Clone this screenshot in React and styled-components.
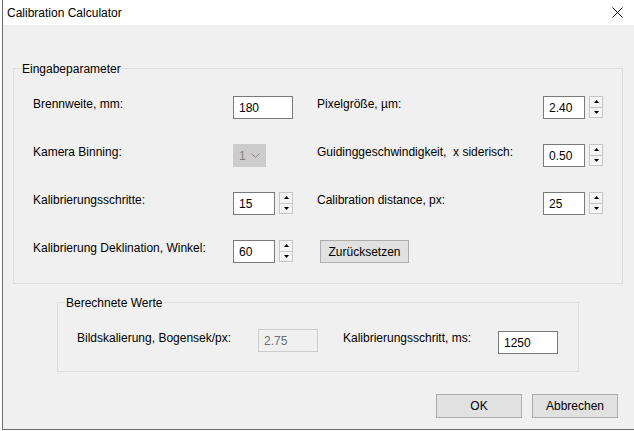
import React from "react";
import styled, { createGlobalStyle } from "styled-components";

const GlobalStyle = createGlobalStyle`
  html, body {
    margin: 0;
    padding: 0;
    background: #ffffff;
  }
  body {
    font-family: "Liberation Sans", Arial, sans-serif;
    font-size: 12px;
    color: #000000;
  }
  #root {
    width: 634px;
    height: 431px;
    overflow: hidden;
  }
`;

const Window = styled.div`
  margin-left: 2px;
  width: 632px;
  height: 430px;
  box-sizing: border-box;
  border-left: 1px solid #6a6a6a;
  border-bottom: 1px solid #6a6a6a;
  display: flex;
  flex-direction: column;
  background: #f0f0f0;
`;

const TitleBar = styled.div`
  flex: none;
  height: 25px;
  display: flex;
  align-items: center;
  justify-content: space-between;
  padding: 0 11px 0 4px;
  background: #ffffff;
`;

const Title = styled.span`
  line-height: 16px;
`;

const CloseIcon = styled.svg`
  display: block;
  width: 11px;
  height: 11px;
`;

const Content = styled.div`
  flex: 1;
  display: flex;
  flex-direction: column;
  padding: 43px 11px 0 10px;
`;

const Group = styled.section`
  position: relative;
  box-sizing: border-box;
  border: 1px solid #dcdcdc;
`;

const Caption = styled.span`
  position: absolute;
  top: -8px;
  left: 7px;
  padding: 0 1px;
  line-height: 16px;
  background: #f0f0f0;
`;

const ParamGrid = styled.div`
  display: grid;
  grid-template-columns: 200px 84px 226px 1fr;
  grid-auto-rows: 23px;
  row-gap: 25px;
  padding: 27px 0 20px 19px;
`;

const Label = styled.span`
  align-self: start;
  line-height: 16px;
  white-space: pre;
  width: ${(p) => (p.$w ? `${p.$w}px` : "auto")};
  flex: none;
  margin-top: ${(p) => p.$top || 0}px;
`;

const Field = styled.div`
  display: flex;
  align-items: flex-start;
`;

const TextBox = styled.input`
  box-sizing: border-box;
  width: ${(p) => p.$w}px;
  height: 23px;
  margin: ${(p) => p.$top || 0}px 0 0 0;
  padding: 0 0 0 5px;
  border: 1px solid ${(p) => (p.disabled ? "#cccccc" : "#7a7a7a")};
  background: ${(p) => (p.disabled ? "#f0f0f0" : "#ffffff")};
  color: ${(p) => (p.disabled ? "#6d6d6d" : "#000000")};
  font: inherit;
  outline: none;
  flex: none;
`;

const Spin = styled.div`
  display: flex;
  flex-direction: column;
  width: 14px;
  height: 22px;
  margin-left: 4px;
`;

const SpinButton = styled.div`
  flex: 1;
  display: flex;
  align-items: center;
  justify-content: center;
  border: 1px solid #c6c6c6;
  background: #f4f4f4;
  & + & {
    border-top: none;
  }
`;

const Arrow = styled.svg`
  display: block;
  width: 5px;
  height: 3px;
`;

const Combo = styled.div`
  box-sizing: border-box;
  width: 33px;
  height: 23px;
  display: flex;
  align-items: center;
  justify-content: space-between;
  padding: 0 5px 0 5px;
  border: 1px solid #cccccc;
  background: #cccccc;
  color: #838383;
`;

const Chevron = styled.svg`
  display: block;
  width: 9px;
  height: 5px;
`;

const PushButton = styled.button`
  box-sizing: border-box;
  width: ${(p) => p.$w}px;
  height: ${(p) => p.$h || 23}px;
  margin: 0;
  padding: 0;
  border: 1px solid #adadad;
  background: #e1e1e1;
  color: #000000;
  font: inherit;
  cursor: default;
`;

const ResetButton = styled(PushButton)`
  justify-self: start;
  margin-left: 3px;
`;

const ResultGroup = styled(Group)`
  width: 522px;
  margin: 18px 0 0 44px;
`;

const ResultRow = styled.div`
  display: flex;
  align-items: flex-start;
  padding: 26px 0 17px 19px;
`;

const Gap = styled.div`
  width: ${(p) => p.$w}px;
  flex: none;
`;

const ButtonBar = styled.div`
  display: flex;
  justify-content: flex-end;
  gap: 10px;
  margin-top: 22px;
  padding-right: 5px;
`;

function Spinner() {
  return (
    <Spin>
      <SpinButton>
        <Arrow viewBox="0 0 5 3">
          <polygon points="2.5,0 5,3 0,3" fill="#000" />
        </Arrow>
      </SpinButton>
      <SpinButton>
        <Arrow viewBox="0 0 5 3">
          <polygon points="0,0 5,0 2.5,3" fill="#000" />
        </Arrow>
      </SpinButton>
    </Spin>
  );
}

function SpinField({ value }) {
  return (
    <Field>
      <TextBox $w={42} value={value} readOnly />
      <Spinner />
    </Field>
  );
}

export default function App() {
  return (
    <>
      <GlobalStyle />
      <Window>
        <TitleBar>
          <Title>Calibration Calculator</Title>
          <CloseIcon viewBox="0 0 11 11">
            <path d="M0.5 0.5 L10.5 10.5 M10.5 0.5 L0.5 10.5" stroke="#000" strokeWidth="1" fill="none" />
          </CloseIcon>
        </TitleBar>
        <Content>
          <Group>
            <Caption>Eingabeparameter</Caption>
            <ParamGrid>
              <Label>Brennweite, mm:</Label>
              <Field>
                <TextBox $w={60} value="180" readOnly />
              </Field>
              <Label>Pixelgröße, µm:</Label>
              <SpinField value="2.40" />

              <Label>Kamera Binning:</Label>
              <Field>
                <Combo>
                  <span>1</span>
                  <Chevron viewBox="0 0 9 5">
                    <polyline points="0.5,0.5 4.5,4.5 8.5,0.5" stroke="#8f8f8f" strokeWidth="1" fill="none" />
                  </Chevron>
                </Combo>
              </Field>
              <Label>{"Guidinggeschwindigkeit,  x siderisch:"}</Label>
              <SpinField value="0.50" />

              <Label>Kalibrierungsschritte:</Label>
              <SpinField value="15" />
              <Label>Calibration distance, px:</Label>
              <SpinField value="25" />

              <Label>Kalibrierung Deklination, Winkel:</Label>
              <SpinField value="60" />
              <ResetButton $w={89}>Zurücksetzen</ResetButton>
            </ParamGrid>
          </Group>

          <ResultGroup>
            <Caption>Berechnete Werte</Caption>
            <ResultRow>
              <Label $w={181} $top={1}>Bildskalierung, Bogensek/px:</Label>
              <TextBox $w={60} value="2.75" disabled readOnly />
              <Gap $w={25} />
              <Label $w={155} $top={1}>Kalibrierungsschritt, ms:</Label>
              <TextBox $w={60} $top={2} value="1250" readOnly />
            </ResultRow>
          </ResultGroup>

          <ButtonBar>
            <PushButton $w={86} $h={24}>OK</PushButton>
            <PushButton $w={86} $h={24}>Abbrechen</PushButton>
          </ButtonBar>
        </Content>
      </Window>
    </>
  );
}
